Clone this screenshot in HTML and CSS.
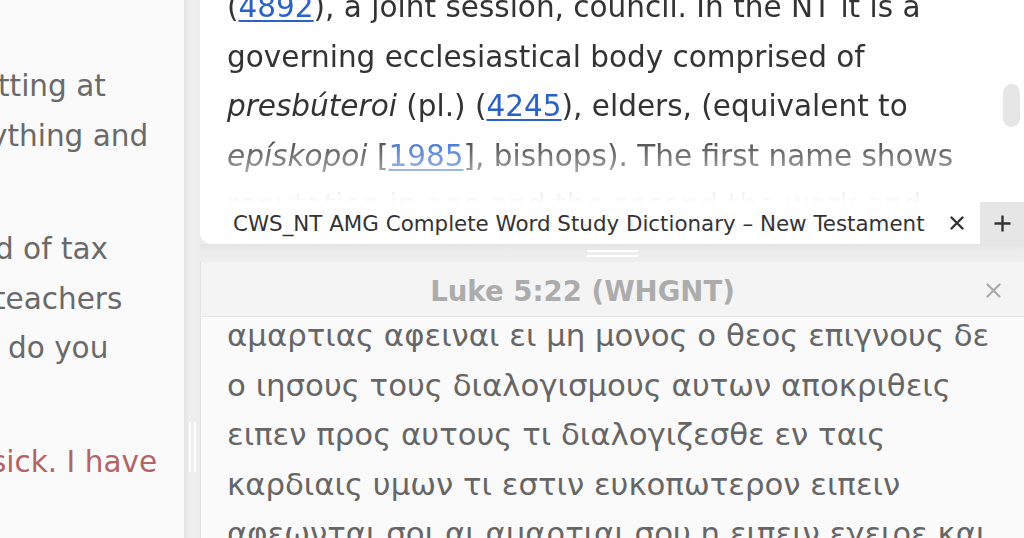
FILE: index.html
```html
<!DOCTYPE html>
<html>
<head>
<meta charset="utf-8">
<link rel="stylesheet" href="styles.css">
</head>
<body>
<div class="app">
  <div class="left-pane">
    <div class="para">
      <div class="ln cut1">tting at</div>
      <div class="ln cut2">ything and</div>
    </div>
    <div class="para">
      <div class="ln cut3">d of tax</div>
      <div class="ln cut4">teachers</div>
      <div class="ln cut5">do you</div>
    </div>
    <div class="para">
      <div class="ln red cut6">sick. I have</div>
    </div>
  </div>
  <div class="vsplit"><div class="vgrip"></div></div>
  <div class="right">
    <div class="top-pane">
      <div class="doc">
        <div class="doc-text">
          <p class="dl">(<a>4892</a>), a joint session, council. In the NT it is a</p>
          <p class="dl">governing ecclesiastical body comprised of</p>
          <p class="dl"><i>presbúteroi</i> (pl.) (<a>4245</a>), elders, (equivalent to</p>
          <p class="dl"><i>epískopoi</i> [<a>1985</a>], bishops). The first name shows</p>
          <p class="dl">reputation in age and the second the work and</p>
        </div>
        <div class="scroll-thumb"></div>
      </div>
      <div class="tabbar">
        <div class="tab"><span class="tab-title">CWS_NT AMG Complete Word Study Dictionary – New Testament</span><svg class="tab-close" width="14" height="14" viewBox="0 0 14 14"><path d="M1.5 1.5 L12.5 12.5 M12.5 1.5 L1.5 12.5" stroke="#333" stroke-width="2.4" stroke-linecap="round" fill="none"/></svg></div>
        <div class="tab-add"><svg width="17" height="17" viewBox="0 0 17 17"><path d="M8.5 0.5 V16.5 M0.5 8.5 H16.5" stroke="#333" stroke-width="2.4" fill="none"/></svg></div>
      </div>
    </div>
    <div class="hsplit"><div class="hgrip"></div></div>
    <div class="bottom-pane">
      <div class="bp-head"><span class="bp-title">Luke 5:22 (WHGNT)</span><svg class="bp-close" width="15" height="15" viewBox="0 0 15 15"><path d="M1.5 1.5 L13.5 13.5 M13.5 1.5 L1.5 13.5" stroke="#a9a9a9" stroke-width="2.2" stroke-linecap="round" fill="none"/></svg></div>
      <div class="bp-body">
        <p class="gl">αμαρτιας αφειναι ει μη μονος ο θεος επιγνους δε</p>
        <p class="gl">ο ιησους τους διαλογισμους αυτων αποκριθεις</p>
        <p class="gl">ειπεν προς αυτους τι διαλογιζεσθε εν ταις</p>
        <p class="gl">καρδιαις υμων τι εστιν ευκοπωτερον ειπειν</p>
        <p class="gl">αφεωνται σοι αι αμαρτιαι σου η ειπειν εγειρε και</p>
      </div>
    </div>
  </div>
</div>
</body>
</html>
```
FILE: styles.css
```css
* { box-sizing: border-box; }
html, body { margin: 0; padding: 0; }
body {
  width: 1024px;
  height: 538px;
  overflow: hidden;
  font-family: "DejaVu Sans", sans-serif;
  background: #ebebeb;
}
p { margin: 0; }
.app {
  display: flex;
  width: 1024px;
  height: 538px;
}
.left-pane {
  width: 184px;
  flex: none;
  background: #fafafa;
  overflow: hidden;
  padding-top: 62px;
  color: #6a6a6a;
  font-size: 29.5px;
  line-height: 49.5px;
  white-space: nowrap;
}
.para + .para { margin-top: 64px; }
.red { color: #b36464; }
.cut1 { margin-left: -2px; }
.cut2 { margin-left: -10px; }
.cut3 { margin-left: -5px; }
.cut4 { margin-left: -6px; }
.cut5 { margin-left: 8px; }
.cut6 { margin-left: -9px; }

.vsplit {
  width: 16px;
  flex: none;
  background: linear-gradient(to right, #e4e4e4, #efefef 40%, #ececec);
  display: flex;
  flex-direction: column;
  align-items: center;
  padding-top: 422px;
}
.vgrip {
  width: 7px;
  height: 50px;
  border-left: 2px solid #fff;
  border-right: 2px solid #fff;
}
.right {
  flex: 1;
  display: flex;
  flex-direction: column;
  min-width: 0;
}
.top-pane {
  height: 244px;
  flex: none;
  background: #fff;
  border-bottom-left-radius: 12px;
  display: flex;
  flex-direction: column;
  overflow: hidden;
}
.doc {
  position: relative;
  height: 202px;
  flex: none;
  overflow: hidden;
}
.doc-text {
  padding-left: 27px;
  margin-top: -17px;
  color: #333;
  font-size: 29.5px;
  line-height: 49.5px;
  white-space: nowrap;
  -webkit-mask-image: linear-gradient(to bottom, #000 0, #000 148px, rgba(0,0,0,0.55) 182px, rgba(0,0,0,0.08) 208px, rgba(0,0,0,0) 222px);
  mask-image: linear-gradient(to bottom, #000 0, #000 148px, rgba(0,0,0,0.55) 182px, rgba(0,0,0,0.08) 208px, rgba(0,0,0,0) 222px);
}
.doc-text a {
  color: #2a62c9;
  text-decoration: underline;
  text-underline-offset: 3px;
}
.scroll-thumb {
  position: absolute;
  right: 4px;
  top: 84px;
  width: 17px;
  height: 43px;
  border-radius: 9px;
  background: #e6e6e6;
}
.tabbar {
  flex: 1;
  display: flex;
}
.tab {
  flex: 1;
  background: #fff;
  border-bottom-right-radius: 12px;
  display: flex;
  align-items: center;
  padding-left: 33px;
  padding-right: 16px;
  color: #333;
  font-size: 21.4px;
}
.tab-title { flex: 1; white-space: nowrap; }
.tab-close { flex: none; }
.tab-add {
  width: 44px;
  flex: none;
  background: #e6e6e6;
  display: flex;
  align-items: center;
  justify-content: center;
}
.hsplit {
  height: 18px;
  flex: none;
  background: linear-gradient(to bottom, #e4e4e4, #ececec 40%, #eeeeee);
  display: flex;
  justify-content: center;
  padding-top: 6px;
}
.hgrip {
  width: 51px;
  height: 7px;
  border-top: 2px solid #fff;
  border-bottom: 2px solid #fff;
}
.bottom-pane {
  flex: 1;
  background: #fafafa;
  border-left: 1px solid #e2e2e2;
  display: flex;
  flex-direction: column;
  overflow: hidden;
}
.bp-head {
  height: 55px;
  flex: none;
  background: #f4f4f4;
  border-bottom: 1px solid #e6e6e6;
  display: flex;
  align-items: center;
  justify-content: center;
  padding-right: 60px;
  padding-top: 5px;
  position: relative;
}
.bp-title {
  font-weight: bold;
  color: #acacac;
  font-size: 27.6px;
}
.bp-close {
  position: absolute;
  right: 23px;
  top: 21px;
}
.bp-body {
  padding-left: 26px;
  color: #666;
  font-size: 30.8px;
  line-height: 49.5px;
  white-space: nowrap;
  margin-top: -6px;
}
```
